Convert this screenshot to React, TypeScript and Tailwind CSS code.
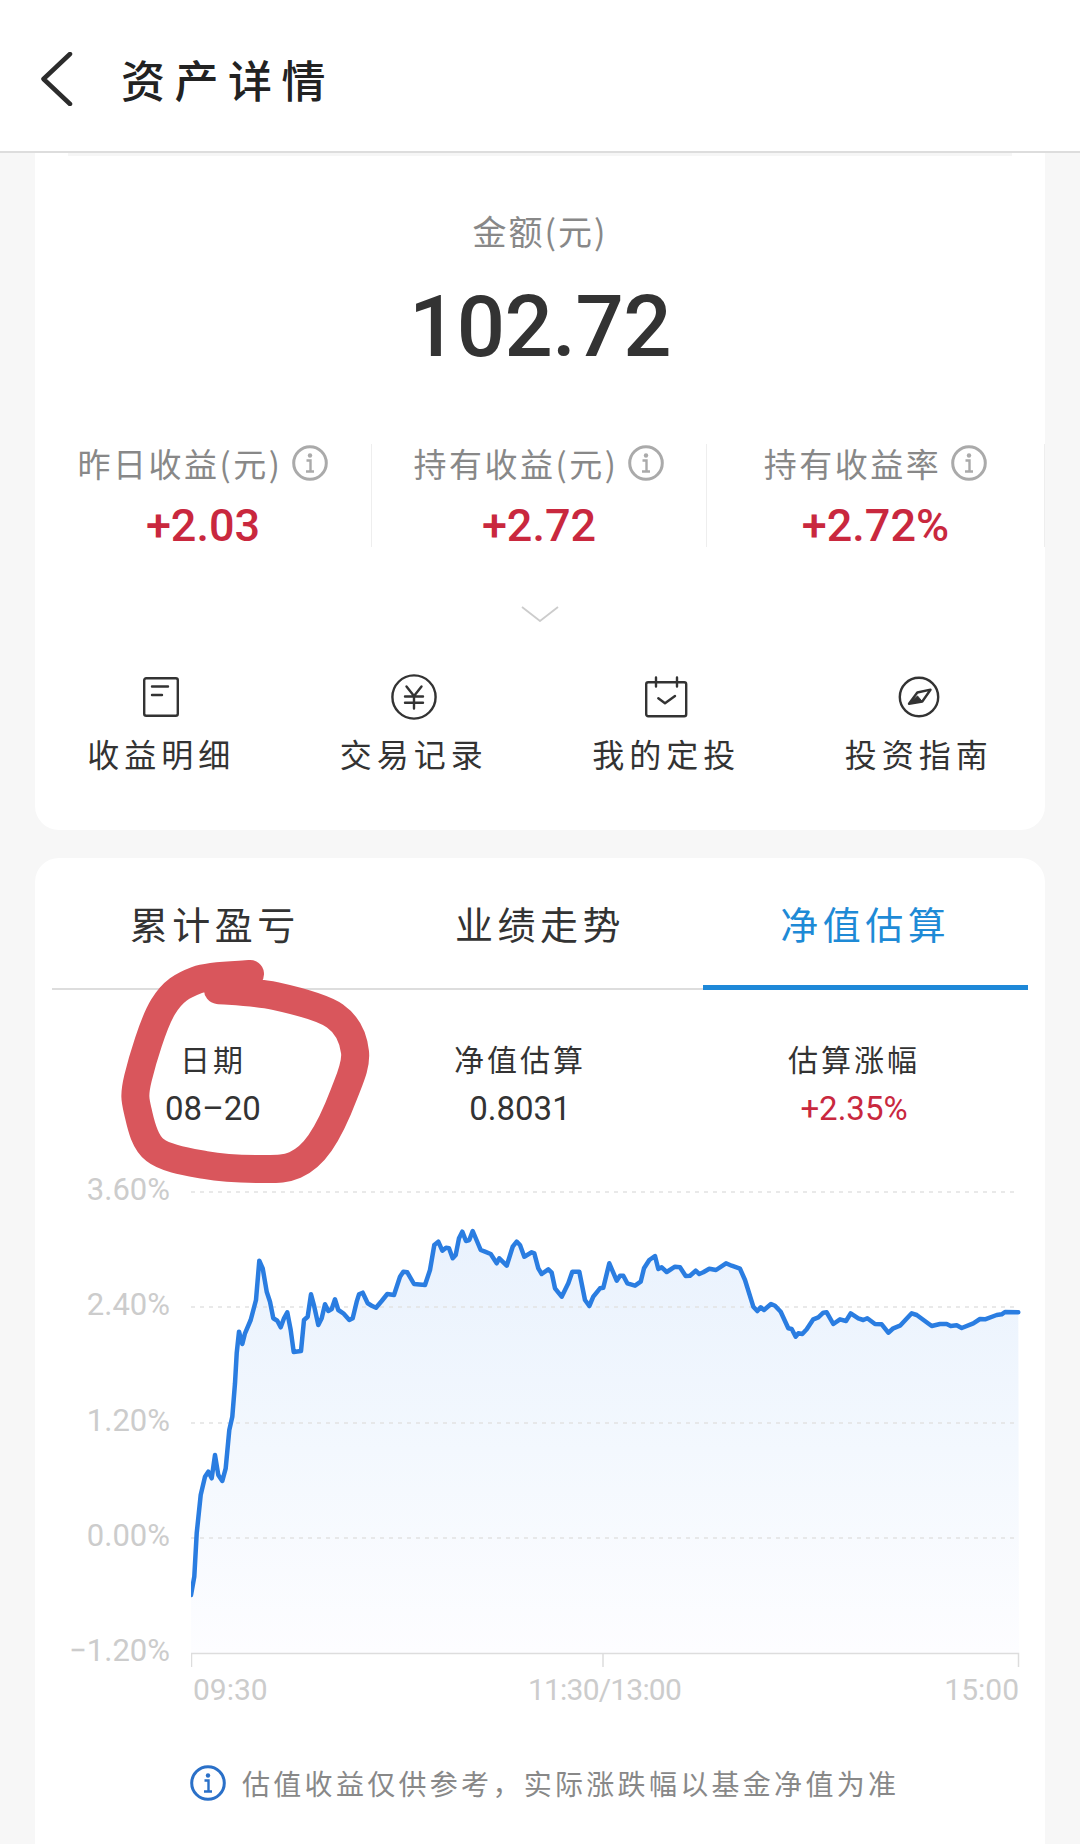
const cjk = { fontFamily: '"Noto Sans CJK SC", sans-serif' };

// traced from the reference, in page pixels x 3 (two overlapping crops of the chart)
const leftTrace = [[393,1305],[403,1250],[410,1120],[422,1005],[435,950],[445,935],[455,955],[465,885],[475,945],[487,963],[497,925],[508,810],[517,770],[525,670],[530,580],[537,515],[547,552],[555,520],[572,480],[588,420],[598,302],[608,325],[620,395],[630,425],[640,475],[652,482],[662,502],[672,475],[682,457],[692,510],[701,576],[723,573],[732,480],[743,470],[753,403],[763,440],[775,495],[785,475],[795,433],[805,453],[815,447],[825,418],[835,450],[850,460],[868,480],[878,475],[890,425],[897,403],[908,398],[923,430],[935,437],[948,443],[965,423],[982,402],[1002,405],[1020,350],[1030,335],[1042,337],[1062,372],[1095,375],[1110,330],[1123,255],[1135,245],[1147,272],[1158,263],[1167,265],[1178,295],[1187,285],[1197,235],[1207,215],[1218,243],[1228,240],[1238,213],[1262,270],[1275,275],[1292,282],[1310,310],[1318,295],[1340,317],[1358,260],[1370,245],[1380,255],[1393,290],[1415,277],[1423,280],[1435,325],[1445,342],[1465,328],[1475,338]];
const rightTrace = [[45,385],[65,410],[85,370],[97,335],[118,335],[135,420],[148,438],[160,410],[180,385],[190,383],[208,310],[230,362],[240,347],[250,347],[262,370],[285,377],[302,365],[312,325],[328,300],[345,288],[355,327],[365,322],[380,336],[405,320],[420,322],[437,348],[450,347],[467,332],[478,342],[490,337],[508,326],[528,330],[558,310],[575,317],[600,326],[615,360],[640,440],[652,453],[662,442],[672,450],[693,432],[705,437],[722,455],[745,505],[755,507],[767,530],[775,520],[787,522],[800,508],[820,478],[835,472],[850,458],[860,457],[880,492],[900,478],[918,483],[932,460],[955,475],[970,480],[982,475],[1005,492],[1025,493],[1045,518],[1060,505],[1080,497],[1115,460],[1130,465],[1175,498],[1200,492],[1220,492],[1232,498],[1250,496],[1265,504],[1300,490],[1320,477],[1335,478],[1370,465],[1385,463],[1395,456],[1435,457]];

const linePoints = [
  ...leftTrace.map(([x, y]) => [60 + x / 3, 1160 + y / 3]),
  ...rightTrace.map(([x, y]) => [540 + x / 3, 1160 + y / 3]),
];
const lineD = linePoints.map(([x, y], i) => `${i ? 'L' : 'M'}${x.toFixed(1)} ${y.toFixed(1)}`).join(' ');
const areaD = `${lineD} L1019 1653 L191 1653 Z`;

const gridYs = [1192, 1307, 1423, 1538];

// centre line of the red marker stroke, page coordinates
const markerPoints = [[218,990],[275,996],[335,1016],[355,1052],[344,1094],[320,1143],[295,1165],[262,1169],[205,1165],[155,1150],[138,1112],[138,1078],[163,1007],[197,980],[250,974]];

function smoothPath(pts: number[][]) {
  let d = `M${pts[0][0]} ${pts[0][1]}`;
  for (let i = 0; i < pts.length - 1; i++) {
    const p0 = pts[Math.max(i - 1, 0)];
    const p1 = pts[i];
    const p2 = pts[i + 1];
    const p3 = pts[Math.min(i + 2, pts.length - 1)];
    const c1x = p1[0] + (p2[0] - p0[0]) / 6;
    const c1y = p1[1] + (p2[1] - p0[1]) / 6;
    const c2x = p2[0] - (p3[0] - p1[0]) / 6;
    const c2y = p2[1] - (p3[1] - p1[1]) / 6;
    d += ` C${c1x.toFixed(1)} ${c1y.toFixed(1)} ${c2x.toFixed(1)} ${c2y.toFixed(1)} ${p2[0]} ${p2[1]}`;
  }
  return d;
}

function InfoIcon({ color, size = 36 }: { color: string; size?: number }) {
  return (
    <svg width={size} height={size} viewBox="0 0 36 36" fill="none" className="shrink-0">
      <circle cx="18" cy="18" r="16.3" stroke={color} strokeWidth="3" />
      <circle cx="18" cy="10.5" r="2.2" fill={color} />
      <path d="M14.5 15.500h4v10.500M14 26.500h8" stroke={color} strokeWidth="2.400" />
    </svg>
  );
}

function DocIcon() {
  return (
    <svg width="46" height="46" viewBox="0 0 46 46" fill="none" stroke="#333" strokeWidth="2.4" strokeLinecap="round">
      <rect x="6.2" y="4.2" width="33.6" height="37.6" rx="2" />
      <path d="M14 12.500h16M14 21h10" />
    </svg>
  );
}

function YenIcon() {
  return (
    <svg width="46" height="46" viewBox="0 0 46 46" fill="none" stroke="#333" strokeWidth="2.4">
      <circle cx="23" cy="23" r="21.6" />
      <path d="M15.500 12.500 23 22 30.500 12.500M14 22.500h18M14 28.700h18M23 22V34.500" strokeLinecap="round" />
    </svg>
  );
}

function CalendarIcon() {
  return (
    <svg width="46" height="46" viewBox="0 0 46 46" fill="none" stroke="#333" strokeWidth="2.4" strokeLinecap="round" strokeLinejoin="round">
      <rect x="3.2" y="8.2" width="40" height="34" rx="2" />
      <path d="M13 3.500v9M34 3.500v9M15.300 24.300l6.700 5 10-7.300" />
    </svg>
  );
}

function CompassIcon() {
  return (
    <svg width="46" height="46" viewBox="0 0 46 46" fill="none" stroke="#333" strokeWidth="2.4" strokeLinejoin="round">
      <circle cx="23" cy="23" r="19.200" />
      <path d="M34.500 15.700 21.300 18.500 13 29.700 26.300 27.500Z" />
      <path d="M13 29.700 21.500 22 26.300 27.500Z" fill="#333" strokeWidth="1" />
    </svg>
  );
}

function StatCell({ label, value }: { label: string; value: string }) {
  return (
    <div className="flex flex-col items-center h-[103px] border-r border-[#eeeeee]">
      <div className="flex items-center gap-[10px] h-[40px] -mt-[1px] text-[33px] text-[#888888] tracking-[2.500px] leading-[40px]" style={cjk}>
        <span>{label}</span>
        <InfoIcon color="#aaaaaa" />
      </div>
      <div className="mt-[18px] text-[45px] leading-[50px] font-medium text-[#c9283e] font-['Roboto',sans-serif]">{value}</div>
    </div>
  );
}

function QuickLink({ icon, label }: { icon: React.ReactNode; label: string }) {
  return (
    <div className="flex flex-col items-center">
      {icon}
      <div className="mt-[13px] text-[32px] leading-[40px] tracking-[5px] text-[#333333]" style={cjk}>{label}</div>
    </div>
  );
}

function Tab({ label, active }: { label: string; active?: boolean }) {
  return (
    <div
      className={`h-[132px] pt-[2px] flex items-center justify-center text-[38px] tracking-[4.500px] border-b-[5px] -mb-[2px] ${
        active ? 'text-[#1e8ad6] border-[#1e88d8]' : 'text-[#333333] border-transparent'
      }`}
      style={cjk}
    >
      {label}
    </div>
  );
}

function Figure({ label, value, red }: { label: string; value: string; red?: boolean }) {
  return (
    <div className="flex flex-col items-center">
      <div className="text-[30px] leading-[40px] tracking-[3px] text-[#333333]" style={cjk}>{label}</div>
      <div className={`mt-[11px] text-[33px] leading-[40px] font-['Roboto',sans-serif] ${red ? 'text-[#c9283e]' : 'text-[#333333]'}`}>{value}</div>
    </div>
  );
}

function Chart() {
  return (
    <div className="flex mt-[48px] font-['Roboto',sans-serif]">
      <div className="w-[135px] h-[491px] -mt-[2px] flex flex-col justify-between items-end text-[31px] leading-[30px] text-[#cccccc]">
        <span>3.60%</span>
        <span>2.40%</span>
        <span>1.20%</span>
        <span>0.00%</span>
        <span>−1.20%</span>
      </div>
      <div className="ml-[21px] w-[830px]">
        <svg width="830" height="491" viewBox="191 1177 830 491" fill="none" className="block">
          <defs>
            <linearGradient id="area" x1="0" y1="1200" x2="0" y2="1653" gradientUnits="userSpaceOnUse">
              <stop offset="0" stopColor="#e8f1fd" />
              <stop offset="0.55" stopColor="#f3f8fe" />
              <stop offset="1" stopColor="#fdfdff" />
            </linearGradient>
          </defs>
          <path d={areaD} fill="url(#area)" />
          {gridYs.map((y) => (
            <line key={y} x1="191" x2="1019" y1={y} y2={y} stroke="#e2e2e2" strokeWidth="1.5" strokeDasharray="4 5" />
          ))}
          <path d="M191.500 1667V1653.500H1018.500V1667M603 1653.500V1667" stroke="#dddddd" strokeWidth="1.500" />
          <path d={lineD} stroke="#2a7de1" strokeWidth="4.500" strokeLinejoin="round" strokeLinecap="round" />
        </svg>
        <div className="relative h-[40px] mt-[2px] text-[30px] leading-[40px] text-[#cccccc]">
          <span className="absolute left-[2px] top-0">09:30</span>
          <span className="absolute left-[337px] top-0 tracking-[-0.8px]">11:30/13:00</span>
          <span className="absolute right-[2px] top-0">15:00</span>
        </div>
      </div>
    </div>
  );
}

// the red marker someone drew over the screenshot
function MarkerCircle() {
  return (
    <svg className="absolute left-0 top-0 pointer-events-none" width="1080" height="1844" viewBox="0 0 1080 1844" fill="none">
      <path d={smoothPath(markerPoints)} stroke="#d9565c" strokeWidth="28" strokeLinecap="round" strokeLinejoin="round" />
    </svg>
  );
}

export default function App() {
  return (
    <div className="relative w-[1080px] h-[1844px] overflow-hidden bg-[#f7f7f7]">
      <div className="h-[153px] pt-[6px] bg-white border-b-2 border-[#dddddd] flex items-center pl-[40px]">
        <svg width="34" height="54" viewBox="0 0 34 54" fill="none" stroke="#2c2c2c" strokeWidth="4.500" strokeLinecap="round" strokeLinejoin="round">
          <path d="M30 2 3.500 27 30 52" />
        </svg>
        <div className="ml-[47px] text-[44px] font-medium tracking-[9.500px] text-[#222222]" style={cjk}>资产详情</div>
      </div>

      <div className="mx-[35px] bg-white rounded-b-[24px] h-[677px]">
        <div className="mx-[33px] h-[3px] bg-[#f6f6f6]" />
        <div className="pt-[53px] text-center text-[34px] tracking-[2px] leading-[44px] text-[#888888]" style={cjk}>金额(元)</div>
        <div className="mt-[24px] text-center text-[85px] tracking-[-0.5px] leading-[100px] font-medium text-[#333333] font-['Roboto',sans-serif]">102.72</div>
        <div className="mt-[67px] grid grid-cols-[337px_335px_338px]">
          <StatCell label="昨日收益(元)" value="+2.03" />
          <StatCell label="持有收益(元)" value="+2.72" />
          <StatCell label="持有收益率" value="+2.72%" />
        </div>
        <div className="mt-[59px] flex justify-center">
          <svg width="38" height="16" viewBox="0 0 38 16" fill="none" stroke="#cccccc" strokeWidth="1.800">
            <path d="M1 1 19 15 37 1" />
          </svg>
        </div>
        <div className="mt-[52px] grid grid-cols-4">
          <QuickLink icon={<DocIcon />} label="收益明细" />
          <QuickLink icon={<YenIcon />} label="交易记录" />
          <QuickLink icon={<CalendarIcon />} label="我的定投" />
          <QuickLink icon={<CompassIcon />} label="投资指南" />
        </div>
      </div>

      <div className="mx-[35px] mt-[28px] bg-white rounded-t-[24px] h-[990px]">
        <div className="mx-[17px] grid grid-cols-3 border-b-2 border-[#dddddd]">
          <Tab label="累计盈亏" />
          <Tab label="业绩走势" />
          <Tab label="净值估算" active />
        </div>
        <div className="ml-[17px] mt-[48px] grid grid-cols-[322px_292px_376px]">
          <Figure label="日期" value="08–20" />
          <Figure label="净值估算" value="0.8031" />
          <Figure label="估算涨幅" value="+2.35%" red />
        </div>
        <Chart />
        <div className="ml-[155px] mt-[53px] flex items-center gap-[16px]">
          <InfoIcon color="#2a70c8" />
          <span className="text-[28px] leading-[40px] tracking-[3.300px] text-[#888888]" style={cjk}>{'估值收益仅供参考\uFF0C实际涨跌幅以基金净值为准'}</span>
        </div>
      </div>

      <MarkerCircle />
    </div>
  );
}
